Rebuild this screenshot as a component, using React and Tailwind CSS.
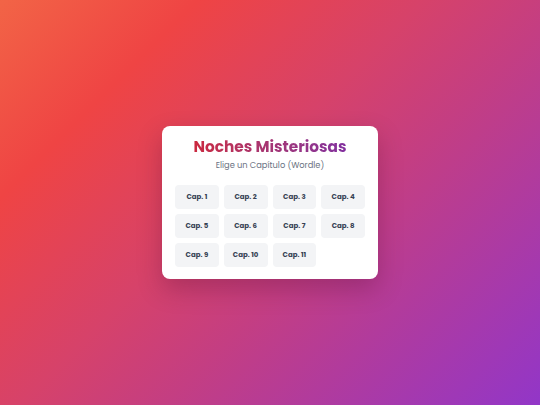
import React from 'react';

const chapters = Array.from({ length: 11 }, (_, i) => i + 1);

export default function App() {
    return (
        <div
            className="w-full min-h-screen flex items-center justify-center bg-[linear-gradient(135deg,#f26446_0%,#ef4444_21%,#d6426a_45%,#c43e82_60%,#9236c8_100%)]"
            style={{ fontFamily: '"Poppins", "Inter", sans-serif' }}
        >
            <div className="w-[216px] bg-white rounded-lg shadow-[0_10px_25px_rgba(60,0,40,0.25)] px-[13px] pt-[10px] pb-[12px]">
                <h1 className="text-center text-[15.3px] leading-[22px] font-bold bg-gradient-to-r from-[#d41f2a] to-[#7a2aa8] bg-clip-text text-transparent">
                    Noches Misteriosas
                </h1>
                <p className="text-center text-[8.3px] leading-[12px] text-gray-500 mt-[1px]">
                    Elige un Capítulo (Wordle)
                </p>

                <div className="grid grid-cols-4 gap-[5px] mt-[14px]">
                    {chapters.map(n => (
                        <button
                            key={n}
                            className="h-[24px] rounded bg-gray-100 text-[7px] font-bold text-gray-700 flex items-center justify-center"
                        >
                            Cap. {n}
                        </button>
                    ))}
                </div>
            </div>
        </div>
    );
}
